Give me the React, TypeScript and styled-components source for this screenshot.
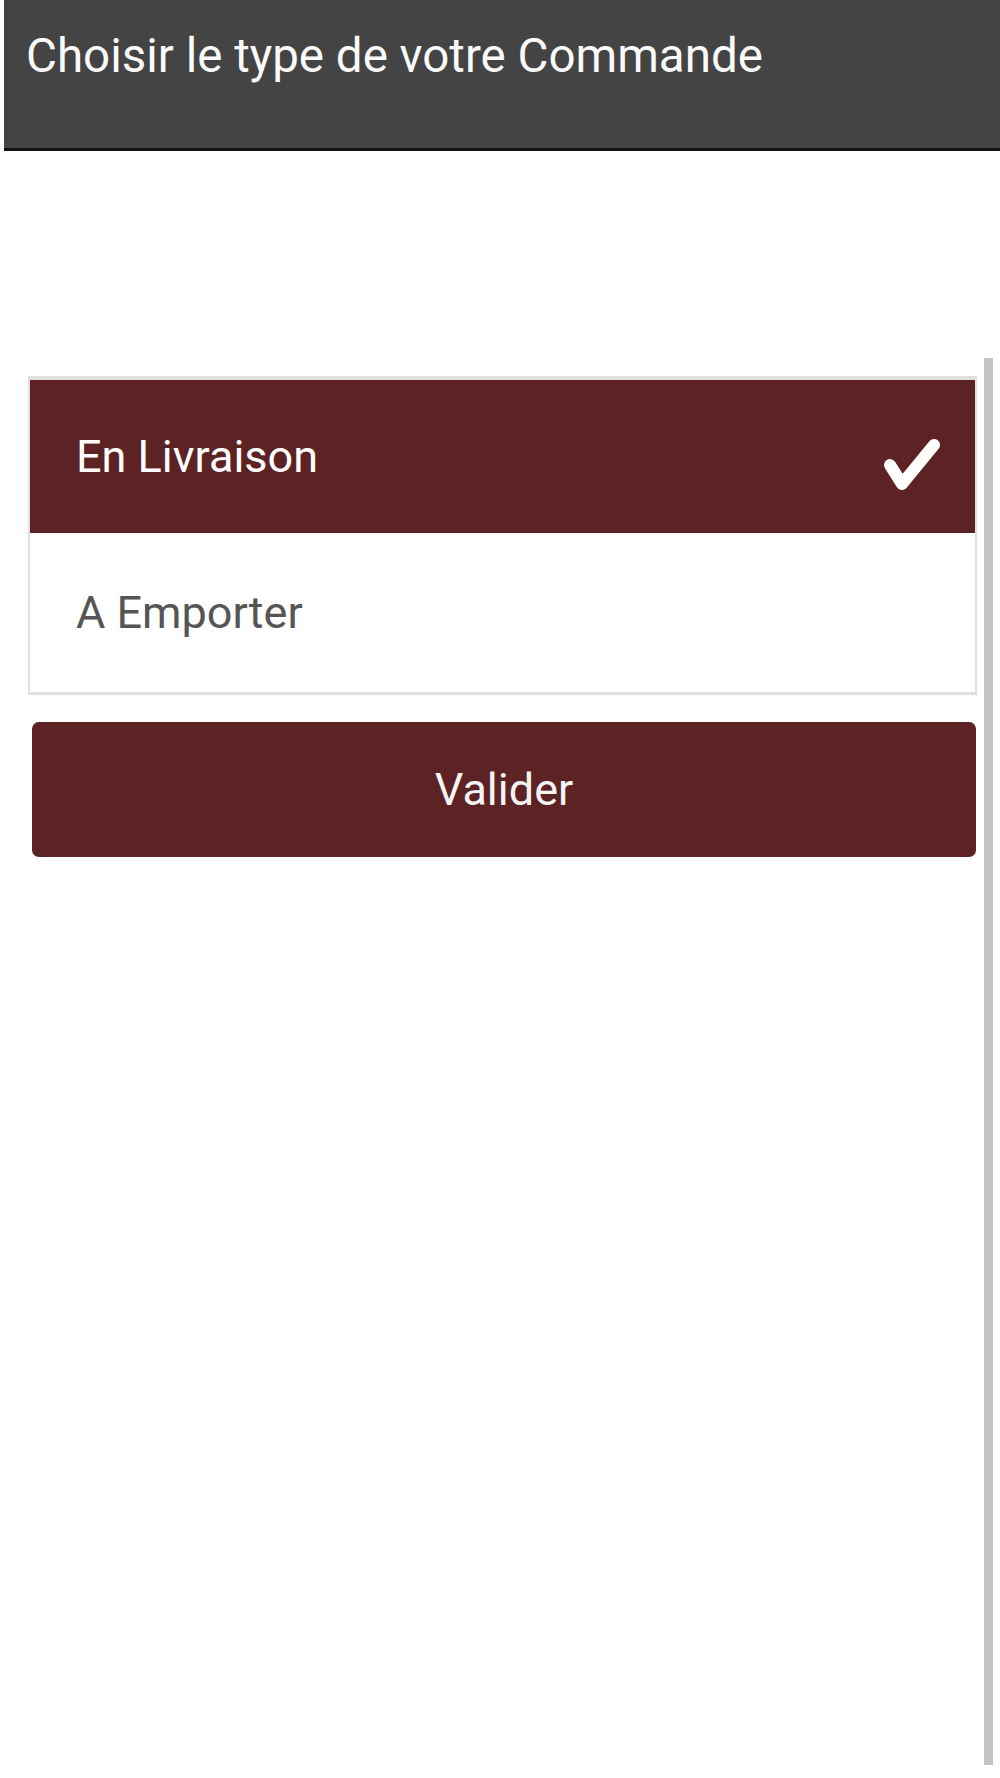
import React, { useState } from 'react';
import styled, { createGlobalStyle } from 'styled-components';

const MAROON = '#5d2223';

const GlobalStyle = createGlobalStyle`
  html, body {
    margin: 0;
    padding: 0;
    background: #ffffff;
    font-family: Roboto, 'Liberation Sans', sans-serif;
  }
`;

const Page = styled.div`
  width: 1000px;
  height: 1778px;
  padding-left: 4px;
  box-sizing: border-box;
  background: #fff;
`;

const Header = styled.div`
  height: 151px;
  box-sizing: border-box;
  padding: 26px 0 0 22px;
  background: #444444;
  border-bottom: 3px solid #111;
`;

const Title = styled.h1`
  margin: 0;
  color: #fafafa;
  font-size: 47.5px;
  font-weight: 400;
  line-height: 60px;
`;

const Body = styled.div`
  display: flex;
  padding-top: 207px;
`;

const Main = styled.div`
  margin-left: 24px;
  width: 949px;
  padding-top: 18px;
`;

const Scrollbar = styled.div`
  margin-left: 7px;
  width: 9px;
  height: 1407px;
  background: #c4c4c4;
`;

const List = styled.div`
  border: 2px solid #e0e0e0;
  border-top-width: 4px;
  border-bottom-width: 3px;
`;

const Item = styled.div<{ $selected?: boolean }>`
  display: flex;
  align-items: center;
  justify-content: space-between;
  height: ${p => (p.$selected ? 153 : 159)}px;
  padding: 0 34px 0 46px;
  box-sizing: border-box;
  background: ${p => (p.$selected ? MAROON : '#fff')};
  color: ${p => (p.$selected ? '#fff' : '#555')};
  font-size: 45px;
  cursor: pointer;
`;

const Check = styled.svg`
  width: 58px;
  height: 54px;
  margin-top: 14px;
`;

const Button = styled.button`
  display: block;
  margin: 27px 1px 0 4px;
  width: calc(100% - 5px);
  height: 135px;
  border: none;
  border-radius: 7px;
  background: ${MAROON};
  color: #f4f4f4;
  font-family: Roboto, 'Liberation Sans', sans-serif;
  font-size: 45px;
  cursor: pointer;
`;

const options = ['En Livraison', 'A Emporter'];

export default function App() {
  const [selected, setSelected] = useState(0);
  return (
    <Page>
      <GlobalStyle />
      <Header>
        <Title>Choisir le type de votre Commande</Title>
      </Header>
      <Body>
        <Main>
          <List>
            {options.map((label, i) => (
              <Item key={label} $selected={i === selected} onClick={() => setSelected(i)}>
                <span>{label}</span>
                {i === selected && (
                  <Check viewBox="0 0 58 54">
                    <polyline
                      points="7,28 19,47 51,8"
                      fill="none"
                      stroke="#fff"
                      strokeWidth="12"
                      strokeLinecap="round"
                      strokeLinejoin="round"
                    />
                  </Check>
                )}
              </Item>
            ))}
          </List>
          <Button>Valider</Button>
        </Main>
        <Scrollbar />
      </Body>
    </Page>
  );
}
